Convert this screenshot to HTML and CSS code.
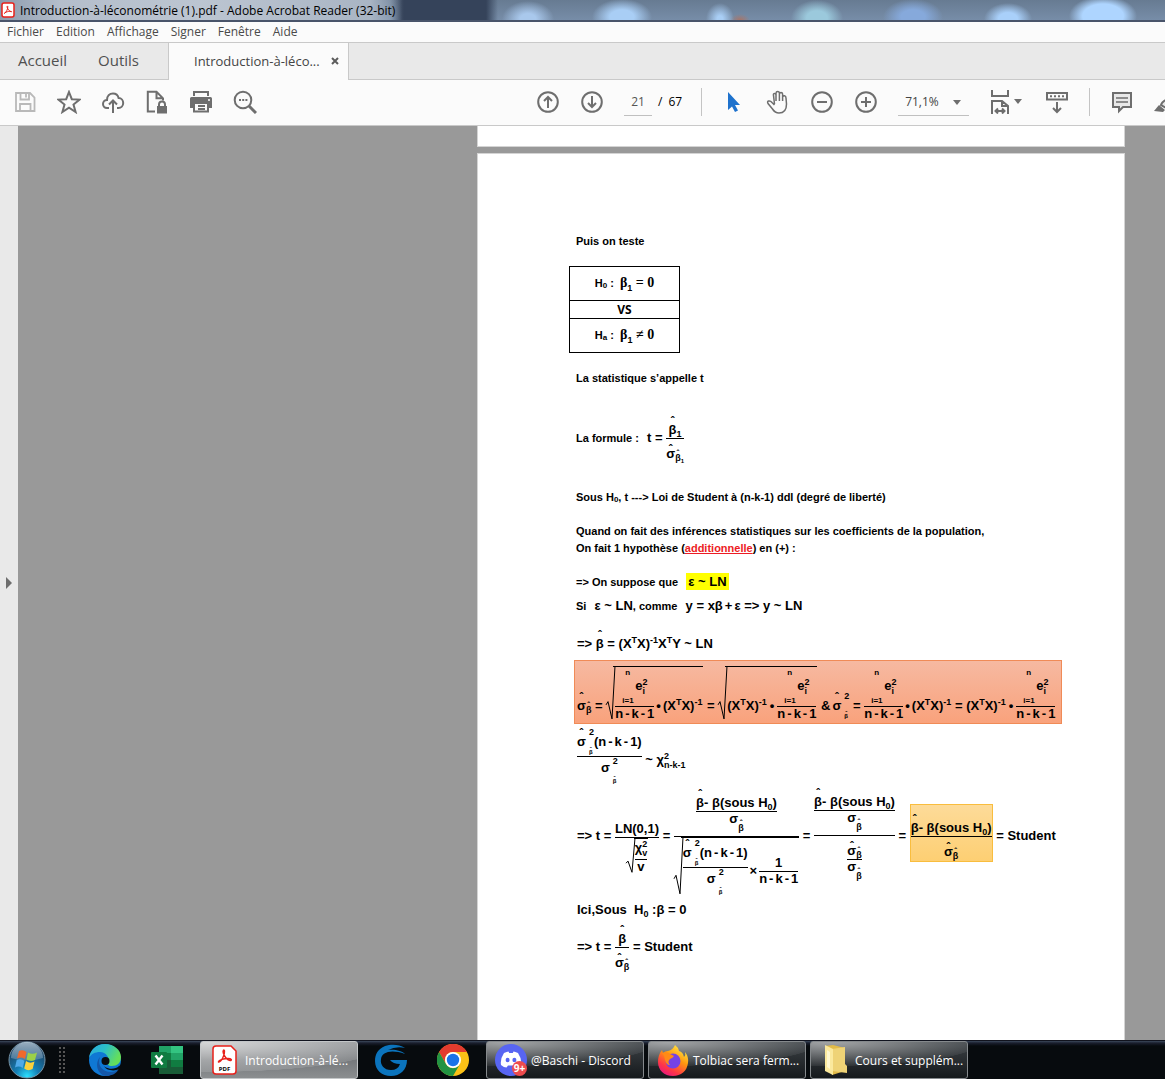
FILE: index.html
```html
<!DOCTYPE html>
<html lang="fr">
<head>
<meta charset="utf-8">
<title>Introduction-à-léconométrie (1).pdf - Adobe Acrobat Reader (32-bit)</title>
<link rel="stylesheet" href="styles.css">
</head>
<body>
<header class="titlebar">
  <svg class="app-icon" width="14" height="16" viewBox="0 0 14 16"><rect x="1" y="1" width="12" height="14" rx="2" fill="#fff" stroke="#e8201a" stroke-width="1.5"/><path d="M3.5 11.5C5 10.500 7 7 6.800 4.500C6.700 3.600 5.800 4 6.200 5.400C6.800 7.500 8.600 9.800 10.600 9.800C11.200 9.400 8 8.600 3.600 10.800Z" fill="none" stroke="#e8201a" stroke-width="1"/></svg>
  <span class="app-title">Introduction-à-léconométrie (1).pdf - Adobe Acrobat Reader (32-bit)</span>
</header>
<nav class="menubar">
  <button>Fichier</button><button>Edition</button><button>Affichage</button><button>Signer</button><button>Fenêtre</button><button>Aide</button>
</nav>
<div class="tabs">
  <button class="tab">Accueil</button><button class="tab">Outils</button>
  <div class="doc-tab"><button class="doc-name">Introduction-à-léco...</button><button class="close" aria-label="Fermer"><svg width="8" height="8" viewBox="0 0 8 8"><path d="M1 1L7 7M7 1L1 7" stroke="#5c5c5c" stroke-width="2"/></svg></button></div>
</div>
<div class="toolbar">
  <div class="tools files">
    <button aria-label="Enregistrer"><svg viewBox="0 0 24 24"><g fill="none" stroke="#b9b9b9" stroke-width="1.800"><path d="M3 3H17L21.500 7.500V21H3Z"/><path d="M7.500 3V9.500H16V3M7 21V14H17.500V21"/><path d="M13 4V7.500"/></g></svg></button>
    <button aria-label="Favori"><svg viewBox="0 0 24 24"><path d="M12 2L14.800 9.200L22.600 9.600L16.500 14.500L18.600 22L12 17.700L5.400 22L7.500 14.500L1.400 9.600L9.200 9.200Z"/></svg></button>
    <button aria-label="Envoyer"><svg viewBox="0 0 24 24"><path d="M8 18H6C3.500 18 2 16 2 14C2 11.500 4 10 6 10C6 6 8.500 3.500 12 3.500C15 3.500 17 5.500 17.600 8C20.500 8 22.200 10.500 22.200 13C22.200 16 20 18 17.500 18H16M12 23V11M8 14.500L12 10.500L16 14.500"/></svg></button>
    <button aria-label="Protéger"><svg viewBox="0 0 24 24"><path d="M10 21.500H2.800V1.800H11.500L18 8.300V10.500M11.500 2V8.300H18"/><rect x="12" y="16" width="10" height="7.500" fill="#6e6e6e" stroke="none"/><path d="M14 16V14.500A3 3 0 0 1 20 14.500V16"/></svg></button>
    <button aria-label="Imprimer"><svg viewBox="0 0 24 24"><path d="M1 8.500Q1 7 2.500 7H21.500Q23 7 23 8.500V18H19V14H5V18H1Z" fill="#6e6e6e" stroke="none"/><path d="M5 6V2H19V6M5 14V21.500H19V14M9 16H16M9 19H16"/><circle cx="20" cy="10" r="1" fill="#fff" stroke="none"/></svg></button>
    <button aria-label="Rechercher"><svg viewBox="0 0 24 24"><circle cx="10" cy="10" r="8.300"/><path d="M16 16L23 23" stroke-width="3"/><path d="M6 10H8M9.200 10H11.200M12.400 10H14.400" stroke-width="2.200"/></svg></button>
  </div>
  <div class="tools paging">
    <button aria-label="Page précédente"><svg viewBox="0 0 24 24"><circle cx="12" cy="12" r="9.800"/><path d="M12 18V7M8 11L12 7L16 11"/></svg></button>
    <button aria-label="Page suivante"><svg viewBox="0 0 24 24"><circle cx="12" cy="12" r="9.800"/><path d="M12 6V17M8 13L12 17L16 13"/></svg></button>
  </div>
  <label class="page-no"><input value="21" aria-label="Page"><span>/</span><span>67</span></label>
  <i class="rule"></i>
  <div class="tools pointer">
    <button aria-label="Sélection"><svg viewBox="0 0 24 24"><path d="M6 2V20L10 16.500L13 22L16 20.500L13 15H18Z" fill="#1e72cd" stroke="none"/></svg></button>
    <button aria-label="Main"><svg viewBox="0 0 24 24" class="thin"><path d="M8.500 14L7.500 5.500Q7 3.500 8.600 3.400Q10 3.400 10 5V11M10 6V3Q10.200 1.500 11.700 1.500Q13.300 1.500 13.400 3V11M13.400 4Q13.600 2.500 15 2.500Q16.500 2.600 16.600 4V11M16.600 7Q17 5.500 18.500 5.700Q20 6 20 8L20.500 14Q20.500 23 13 23Q9 23 6.500 19L2 13.500Q1 11.500 2.500 11Q4.500 10.500 6 12.500L8.500 15"/></svg></button>
    <button aria-label="Zoom arrière"><svg viewBox="0 0 24 24"><circle cx="12" cy="12" r="9.800"/><path d="M7 12H17"/></svg></button>
    <button aria-label="Zoom avant"><svg viewBox="0 0 24 24"><circle cx="12" cy="12" r="9.800"/><path d="M7 12H17M12 7V17"/></svg></button>
  </div>
  <div class="zoom"><select aria-label="Zoom"><option>71,1%</option></select><svg width="8" height="5" viewBox="0 0 8 5"><path d="M0 0H8L4 5Z" fill="#6e6e6e"/></svg></div>
  <button class="fit" aria-label="Affichage de page"><svg viewBox="0 0 24 24"><path d="M4 0V6H20V0M4 24V11H14L20 16V24M14 11V16H20M8 21H16M10 18.500L7.500 21L10 23.500M14 18.500L16.500 21L14 23.500"/></svg><svg class="caret" viewBox="0 0 8 5"><path d="M0 0H8L4 5Z"/></svg></button>
  <button class="keys" aria-label="Barre d'outils"><svg viewBox="0 0 24 24"><path d="M2 3H22V9.500H2Z"/><path d="M5 6.200H19" stroke-dasharray="2 2"/><path d="M12 12V22M8 18L12 22L16 18"/></svg></button>
  <i class="rule"></i>
  <div class="tools marks">
    <button aria-label="Commentaire"><svg viewBox="0 0 24 24"><path d="M3 3H21V17H13L9 21V17H3Z" fill="#e8e8e8"/><path d="M6 8H18M6 12H18" stroke-width="1.500"/></svg></button>
    <button aria-label="Surligner"><svg viewBox="0 0 24 24"><path d="M7 15Q8 11 14 9L21 3L24 7L17 15Q16 19 12 18Z" fill="#e8e8e8"/><path d="M0 21L5 15L11 20L9 22Z" fill="#6e6e6e" stroke="none"/></svg></button>
  </div>
</div>
<main class="viewer">
  <aside class="rail"><svg width="6" height="12" viewBox="0 0 6 12"><path d="M0 0L6 6L0 12Z" fill="#6e6e6e"/></svg></aside>
  <div class="canvas">
    <div class="page previous"></div>
    <article class="page">
      <p>Puis on teste</p>
      <table class="hypo">
        <tr class="tall"><td>H<sub>0</sub> : &nbsp;<span class="serif">β<sub>1</sub> = 0</span></td></tr>
        <tr><td class="vs">VS</td></tr>
        <tr class="tall"><td>H<sub>a</sub> : &nbsp;<span class="serif">β<sub>1</sub> ≠ 0</span></td></tr>
      </table>
      <p>La statistique s’appelle t</p>
      <p class="formule">La formule : &nbsp;<span class="m">t = <span class="frac low"><span class="num"><span class="hat">β</span><sub>1</sub></span><span class="den"><span class="hat near">σ</span><sub><span class="hat small">β</span><sub>1</sub></sub></span></span></span></p>
      <p class="after-formule">Sous H<sub>0</sub>, t ---&gt; Loi de Student à (n-k-1) ddl (degré de liberté)</p>
      <p class="para">Quand on fait des inférences statistiques sur les coefficients de la population,<br>On fait 1 hypothèse (<u>additionnelle</u>) en (+) :</p>
      <p class="para">=&gt; On suppose que &nbsp;<mark class="m">ε ~ LN</mark></p>
      <p class="si">Si &nbsp;<span class="m">ε ~ LN</span>, comme &nbsp;<span class="m">y = xβ<span class="o">+</span>ε =&gt; y ~ LN</span></p>
      <div class="m line beta">=&gt; <span class="hat">β</span> = (X<sup>T</sup>X)<sup>-1</sup>X<sup>T</sup>Y ~ LN</div>
      <div class="m box salmon"><span class="hat">σ</span><sub><span class="hat small">β</span></sub> = <span class="root"><svg viewBox="0 0 9 50" preserveAspectRatio="none"><path d="M0 36L2 33L6 49L9 0"/></svg><span class="frac"><span class="num sum"><small>n</small><span class="term">e<span class="ss"><i>2</i><i>i</i></span></span><small>i=1</small></span><span class="den">n<span class="o">-</span>k<span class="o">-</span>1</span></span><span class="o">•</span>(X<sup>T</sup>X)<sup>-1</sup></span> = <span class="root"><svg viewBox="0 0 9 50" preserveAspectRatio="none"><path d="M0 36L2 33L6 49L9 0"/></svg>(X<sup>T</sup>X)<sup>-1</sup><span class="o wider">•</span><span class="frac"><span class="num sum"><small>n</small><span class="term">e<span class="ss"><i>2</i><i>i</i></span></span><small>i=1</small></span><span class="den">n<span class="o">-</span>k<span class="o">-</span>1</span></span></span> &amp;<span class="hat gap">σ</span><span class="ss wide"><i>2</i><i><span class="hat tiny">β</span></i></span> = <span class="frac"><span class="num sum"><small>n</small><span class="term">e<span class="ss"><i>2</i><i>i</i></span></span><small>i=1</small></span><span class="den">n<span class="o">-</span>k<span class="o">-</span>1</span></span><span class="o">•</span>(X<sup>T</sup>X)<sup>-1</sup> = (X<sup>T</sup>X)<sup>-1</sup><span class="o wider">•</span><span class="frac"><span class="num sum"><small>n</small><span class="term">e<span class="ss"><i>2</i><i>i</i></span></span><small>i=1</small></span><span class="den">n<span class="o">-</span>k<span class="o">-</span>1</span></span></div>
      <div class="m line chi"><span class="frac"><span class="num"><span class="hat">σ</span><span class="ss wide"><i>2</i><i><span class="hat tiny">β</span></i></span>(n<span class="o">-</span>k<span class="o">-</span>1)</span><span class="den">σ<span class="ss under"><i>2</i><i><span class="hat tiny">β</span></i></span></span></span> ~ χ<span class="ss"><i>2</i><i>n-k-1</i></span></div>
      <div class="m line big">=&gt; t = <span class="frac mid"><span class="num">LN(0,1)</span><span class="den"><span class="root"><svg viewBox="0 0 9 50" preserveAspectRatio="none"><path d="M0 36L2 33L6 49L9 0"/></svg><span class="frac"><span class="num">χ<span class="ss"><i>2</i><i>v</i></span></span><span class="den">v</span></span></span></span></span> = <span class="frac deep"><span class="num"><span class="frac"><span class="num"><span class="hat">β</span>- β(sous H<sub>0</sub>)</span><span class="den hang">σ<sub class="drop"><span class="hat small">β</span></sub></span></span></span><span class="den"><span class="root"><svg viewBox="0 0 9 50" preserveAspectRatio="none"><path d="M0 36L2 33L6 49L9 0"/></svg><span class="frac"><span class="num"><span class="hat">σ</span><span class="ss wide"><i>2</i><i><span class="hat tiny">β</span></i></span>(n<span class="o">-</span>k<span class="o">-</span>1)</span><span class="den">σ<span class="ss under"><i>2</i><i><span class="hat tiny">β</span></i></span></span></span><span class="o">×</span><span class="frac"><span class="num">1</span><span class="den">n<span class="o">-</span>k<span class="o">-</span>1</span></span></span></span></span> = <span class="frac mid"><span class="num"><span class="frac"><span class="num"><span class="hat">β</span>- β(sous H<sub>0</sub>)</span><span class="den hang">σ<sub class="drop"><span class="hat small">β</span></sub></span></span></span><span class="den clear"><span class="frac"><span class="num"><span class="hat near">σ</span><sub><span class="hat small">β</span></sub></span><span class="den">σ<sub class="drop"><span class="hat small">β</span></sub></span></span></span></span> = <span class="box amber"><span class="frac low"><span class="num"><span class="hat">β</span>- β(sous H<sub>0</sub>)</span><span class="den"><span class="hat near">σ</span><sub><span class="hat small">β</span></sub></span></span></span> = Student</div>
      <div class="m line ici">Ici,Sous &nbsp;H<sub>0</sub> :β = 0</div>
      <div class="m line last">=&gt; t = <span class="frac low"><span class="num"><span class="hat">β</span></span><span class="den"><span class="hat near">σ</span><sub><span class="hat small">β</span></sub></span></span> = Student</div>
    </article>
  </div>
</main>
<footer class="taskbar">
  <button class="start" aria-label="Démarrer"><svg width="38" height="38" viewBox="0 0 38 38"><defs><radialGradient id="orb" cx=".5" cy=".95" r=".8"><stop offset="0" stop-color="#2be0ff"/><stop offset=".4" stop-color="#157fb5"/><stop offset="1" stop-color="#1d4263"/></radialGradient><linearGradient id="shine" x2="0" y2="1"><stop offset="0" stop-color="#dce9f2"/><stop offset="1" stop-color="#5d86a6"/></linearGradient></defs><circle cx="19" cy="19" r="18" fill="url(#orb)" stroke="#7795a8" stroke-width="1"/><path d="M3 17A16 16 0 0 1 35 17Q19 22 3 17Z" fill="url(#shine)" opacity=".65"/><path d="M11 10Q15 8 18.500 11L17 18Q13 15.500 9 17.500Z" fill="#f0682c"/><path d="M20 11.500Q24 14 29 11.500L27 19Q22.500 21 18.500 18.500Z" fill="#9bd048"/><path d="M8.700 19Q12.500 17 16.500 19.700L14.700 27Q11 24.500 7 26.500Z" fill="#4fa9e8"/><path d="M18 20Q22 23 26.500 20.500L24.600 28Q20 30.500 16.200 27.500Z" fill="#fbd13c"/></svg></button>
  <i class="grip"></i>
  <button class="pin" aria-label="Edge"><svg width="32" height="32" viewBox="0 0 32 32"><defs><linearGradient id="eg" x2="1" y2=".4"><stop offset="0" stop-color="#2aa8e0"/><stop offset=".5" stop-color="#2bbfc9"/><stop offset="1" stop-color="#65df59"/></linearGradient></defs><circle cx="16" cy="16" r="16" fill="#0f78d4"/><path d="M0 14C1 6 7 0 16 0C25 0 32 6 32 13C32 19 28 22 23 22C19 22 18 20 19 18C21 14 17 8 11 8C6 8 2 10 0 14Z" fill="url(#eg)"/><path d="M11 13C8 21 13 28 22 28C26 28 28 27 30 25C27 30 22 32 17 32C9 31 5 20 11 13Z" fill="#1457a8"/><path d="M18 13C14 14 12 20 16 23C21 26 27 25 30 22L32 21L31 24C29 26 25 27 21 26C15 25 12 19 15 14Z" fill="#080d10"/><circle cx="16.500" cy="17" r="4" fill="#080d10"/></svg></button>
  <button class="pin" aria-label="Excel"><svg width="32" height="30" viewBox="0 0 32 30"><path fill="#21a366" d="M8 1H20V8H8Z"/><path fill="#33c481" d="M20 1H32V8H20Z"/><path fill="#107c41" d="M8 8H32V15H8Z"/><path fill="#21a366" d="M20 8H32V15H20Z"/><path fill="#107c41" d="M20 15H32V22H20Z"/><path fill="#185c37" d="M8 15H20V22H32V29H8Z"/><rect y="7" width="16" height="16" rx="1" fill="#107c41"/><path d="M4.500 10.500L11.500 19.500M11.500 10.500L4.500 19.500" stroke="#fff" stroke-width="2.400"/></svg></button>
  <button class="task active"><svg width="32" height="30" viewBox="0 0 32 30"><path d="M7 1H22L27 6V26Q27 29 24 29H7Q4 29 4 26V4Q4 1 7 1Z" fill="#fff" stroke="#e8201a" stroke-width="1.500"/><path d="M10 17C12 17 16 10 15.500 6C15 4 13.500 5 14.300 8C15.500 12 18.500 15.500 21 15.500C23.500 15.500 22.500 13.500 19 13.500C15 13.500 10 15 9.500 16.500C9.300 17 9.500 17.300 10 17Z" fill="none" stroke="#e8201a" stroke-width="1.400"/><text x="15.500" y="26" text-anchor="middle" font-size="6" font-weight="bold" font-family="Open Sans, sans-serif">PDF</text></svg><span>Introduction-à-lé...</span></button>
  <button class="pin" aria-label="G"><svg width="34" height="32" viewBox="0 0 34 32"><path d="M31 4C25 0 17 0 11 2C4 5 1 10 1 17C1 26 8 32 17 32C26 32 33 26 33 16H16Q19 20 26 20Q24 26 17 26C10 26 6 21 7 15C8 8 17 5 31 10C28 7 21 5 14 6Q22 2 31 4Z" fill="#0b74bd"/></svg></button>
  <button class="pin" aria-label="Chrome"><svg width="32" height="32" viewBox="0 0 32 32"><circle cx="16" cy="16" r="16" fill="#fbc116"/><path d="M2.100 8A16 16 0 0 1 29.900 8H16A8 8 0 0 0 9 20Z" fill="#e33b2e"/><path d="M2.100 8A16 16 0 0 0 16 32L23 20A8 8 0 0 1 9 20Z" fill="#229342"/><circle cx="16" cy="16" r="8" fill="#fff"/><circle cx="16" cy="16" r="6.200" fill="#1a73e8"/></svg></button>
  <button class="task"><svg width="32" height="32" viewBox="0 0 32 32"><circle cx="16" cy="16" r="16" fill="#5865f2"/><path d="M9 9Q12 7.500 13.500 7.500L14.200 9H17.800L18.500 7.500Q20 7.500 23 9Q27 15 26 21Q23 23.500 20.500 23.500L19 21.500H13L11.500 23.500Q9 23.500 6 21Q5 15 9 9Z" fill="#fff"/><ellipse cx="12.600" cy="16" rx="2" ry="2.300" fill="#5865f2"/><ellipse cx="19.400" cy="16" rx="2" ry="2.300" fill="#5865f2"/><circle cx="24.500" cy="24.500" r="7.500" fill="#ed4b4e"/><text x="24.500" y="28" text-anchor="middle" font-size="10" font-weight="bold" fill="#fff" font-family="Open Sans, sans-serif">9+</text></svg><span>@Baschi - Discord</span></button>
  <button class="task"><svg width="32" height="32" viewBox="0 0 32 32"><defs><linearGradient id="ff" x1=".8" y1="0" x2=".2" y2="1"><stop offset="0" stop-color="#fff44f"/><stop offset=".4" stop-color="#ff980e"/><stop offset=".75" stop-color="#ff3647"/><stop offset="1" stop-color="#e31587"/></linearGradient></defs><path d="M18 1Q21 3 22 7Q26 8 27 13Q29 11 28 8Q32 13 31 19C30 27 24 32 16 32C7 32 1 26 1 18Q1 11 5 6L6 9Q8 7 11 7Q16 6 18 1Z" fill="url(#ff)"/><circle cx="16" cy="17" r="7.500" fill="#7542e5"/><path d="M5 9Q10 7 13 10L17 12Q16 14 13 15Q10 18 13 21Q9 21 8 16Q8 12 5 9Z" fill="#ff8a16"/></svg><span>Tolbiac sera ferm...</span></button>
  <button class="task"><svg width="32" height="32" viewBox="0 0 32 32"><path d="M6 2L14 1L26 4V27L13 31Z" fill="#e2bb48"/><path d="M13 5L26 3V20L28 22V29L13 27Z" fill="#efd376"/><path d="M6 1L14 5V31L6 27Z" fill="#fbe99d"/><path d="M8 6L11 8V25L8 23Z" fill="#fff7cf"/></svg><span>Cours et supplém...</span></button>
</footer>
</body>
</html>
```
FILE: styles.css
```css
* { box-sizing: border-box; }
body { margin: 0; height: 100vh; display: flex; flex-direction: column; overflow: hidden; font-family: "Open Sans", "Noto Sans", sans-serif; font-size: 12px; color: #333; background: #fbfbfb; }
button { border: 0; padding: 0; background: none; font: inherit; color: inherit; }
p { margin: 0; }

/* window title */
.titlebar { display: flex; align-items: center; flex: none; height: 22px; padding-left: 1px; gap: 5px; overflow: hidden; border-bottom: 2px solid #49546a; color: #000;
  background:
    linear-gradient(90deg, #8d9bad 0, #b4becb 60px, #bcc5d1 200px, #a9b5c4 370px, #a9b5c400 404px),
    linear-gradient(90deg, transparent 390px, #35435a 402px, #35435a 486px, transparent 498px),
    radial-gradient(ellipse 26px 18px at 528px 19px, #a9c8ec 30%, #a9c8ec00 100%),
    radial-gradient(ellipse 30px 18px at 622px 17px, #a9cef5 40%, #a9cef500 100%),
    radial-gradient(ellipse 14px 16px at 720px 19px, #a9cef5 20%, #a9cef500 100%),
    radial-gradient(ellipse 10px 6px at 740px 20px, #a2776f 10%, #a2776f00 100%),
    radial-gradient(ellipse 26px 18px at 817px 18px, #9bc9dc 40%, #9bc9dc00 100%),
    radial-gradient(ellipse 30px 18px at 913px 17px, #86a9db 40%, #86a9db00 100%),
    radial-gradient(ellipse 24px 16px at 1008px 19px, #a9d0fa 40%, #a9d0fa00 100%),
    radial-gradient(ellipse 34px 20px at 1103px 16px, #aed5ff 60%, #aed5ff00 100%),
    linear-gradient(#677b92, #778da8); }
.app-icon { flex: none; }
.app-title { white-space: nowrap; }

.menubar { display: flex; flex: none; height: 20px; padding: 0 0 2px 7px; gap: 12px; color: #4a4a4a; }
.tabs { display: flex; flex: none; height: 38px; background: #e9e9e9; border: solid #c9c9c9; border-width: 1px 0; color: #505050; font-size: 15px; }
.tab { padding: 0 0 2px 18px; margin-right: 13px; }
.doc-tab { display: flex; align-items: center; margin: 0 0 -1px 16px; width: 181px; padding: 0 0 2px 25px; gap: 11px; background: #fbfbfb; border: solid #c9c9c9; border-width: 0 1px; font-size: 13px; color: #444; }
.close { display: flex; }

/* tools */
.toolbar { display: flex; align-items: center; flex: none; height: 46px; padding: 0 0 2px 13px; overflow: hidden; border-bottom: 1px solid #c9c9c9; }
.toolbar > * { flex: none; }
.toolbar svg { display: block; width: 24px; height: 24px; fill: none; stroke: #6e6e6e; stroke-width: 2; }
.toolbar svg.thin { stroke-width: 1.5; }
.tools { display: flex; gap: 20px; }
.paging { margin-left: 279px; }
.page-no { display: flex; align-items: center; gap: 6px; margin: 0 19px 0 20px; color: #000; }
.page-no input { width: 28px; height: 28px; padding: 0; border: 0; border-bottom: 1px solid #c0c0c0; background: none; text-align: center; font: inherit; color: #555; }
.rule { width: 1px; height: 28px; background: #c4c4c4; }
.pointer { margin-left: 20px; }
.zoom { position: relative; margin-left: 20px; width: 71px; }
.zoom select { appearance: none; width: 100%; height: 28px; padding: 0 0 0 7px; border: 0; border-bottom: 1px solid #c0c0c0; border-radius: 0; background: none; font: inherit; color: #444; }
.toolbar .zoom svg { position: absolute; right: 8px; top: 12px; width: 8px; height: 5px; stroke: none; }
.fit { display: flex; align-items: center; margin-left: 19px; gap: 2px; }
.toolbar .fit .caret { width: 8px; height: 5px; fill: #6e6e6e; stroke: none; }
.keys { margin: 0 20px 0 23px; }
.marks { margin-left: 20px; }

/* document */
.viewer { display: flex; flex: 1; min-height: 0; overflow: hidden; }
.rail { display: flex; align-items: center; justify-content: center; width: 18px; background: #e9e9e9; }
.canvas { flex: 1; display: flex; flex-direction: column; align-items: flex-end; gap: 6px; padding-right: 40px; overflow: hidden; background: #999; }
.page { flex: none; width: 648px; min-height: 916px; padding: 79px 63px 0 98px; background: #fff; border: 1px solid #d4d4d4; font: bold 11px/17px "Liberation Sans", Arial, sans-serif; color: #000; white-space: nowrap; }
.previous { min-height: 0; height: 21px; padding: 0; border-top: 0; }
.hypo { margin: 16px 0 17px -7px; width: 111px; border-collapse: collapse; text-align: center; font: inherit; }
.hypo td { padding: 0; border: 1px solid #000; }
.hypo .tall td { height: 34px; padding-bottom: 2px; }
.hypo .vs { font: bold 12px/17px "Open Sans", sans-serif; }
.serif { font-family: "Liberation Serif", "Times New Roman", serif; font-size: 14px; }
sub, sup { font-size: 8px; line-height: 0; }
sub { vertical-align: -1px; }
sup { vertical-align: 5px; font-size: 9px; }
.m sub { vertical-align: -3px; font-size: 9px; }
.m sub sub { font-size: 6px; vertical-align: -2px; }
.serif sub { vertical-align: -4px; font-family: "Liberation Sans", Arial, sans-serif; font-size: 9px; }
u { color: #ed1c24; }
.para { margin-top: 17px; }
.formule { margin-top: 36px; }
.after-formule { margin-top: 28px; }
.si { margin-top: 7px; }
p .m { margin-left: 2px; }
mark { padding: 1px 2px; background: #ff0; color: #000; }

/* formulas: a fraction sits on the baseline of its denominator */
.m { font-size: 13px; line-height: 14px; }
.o { margin: 0 2px; }
.o.wider { margin: 0 3px; }
.frac { display: inline-block; vertical-align: -8px; text-align: center; line-height: 14px; }
.frac.low { vertical-align: -16px; }
.frac.low > .den, .den.clear { padding-top: 8px; }
.frac.mid { vertical-align: -23px; }
.frac.deep { vertical-align: -35px; }
.num, .den { display: block; }
.num { padding-bottom: 1px; border-bottom: 1px solid #000; }
.den.hang { padding-bottom: 7px; }
.sum { display: flex; flex-direction: column; align-items: flex-start; padding-bottom: 0; }
.sum small { font-size: 8px; line-height: 10px; padding-left: 7px; }
.sum small:first-child { padding-left: 10px; }
.term { padding-left: 20px; }
.ss { display: inline-block; vertical-align: -4px; text-align: left; font-size: 9px; line-height: 9px; }
.ss i { display: block; font-style: normal; }
.ss.wide, .ss.under { padding-left: 3px; line-height: 8px; }
.ss.wide { vertical-align: -8px; margin-bottom: -1px; }
.ss.under { vertical-align: -11px; }
.ss.wide i + i, .ss.under i + i { margin-top: 11px; }
.root { display: inline-block; position: relative; padding: 1px 1px 0 9px; border-top: 1px solid #000; border-image: linear-gradient(90deg, transparent 8px, #000 8px) 1; }
.root svg { position: absolute; left: 0; top: -1px; width: 9px; height: 100%; overflow: visible; }
.root path { fill: none; stroke: #000; stroke-width: 1; vector-effect: non-scaling-stroke; }
.hat { position: relative; }
.hat.gap { margin-left: 2px; }
.hat::before { content: "ˆ"; position: absolute; left: 0; right: 0; top: -9px; text-align: center; font-size: 11px; line-height: 14px; }
.hat.near::before { top: -5px; }
.hat.small::before { top: -5px; font-size: 8px; line-height: 10px; }
.hat.tiny { font-size: 6px; }
.hat.tiny::before { top: -4px; font-size: 6px; line-height: 8px; }
.m sub.drop { vertical-align: -8px; }
.line { margin-left: 1px; }
.beta { margin-top: 22px; }
.box { border: 1px solid #f08b57; }
.salmon { margin: 9px -1px 0 -2px; padding: 5px 0 2px 2px; background: linear-gradient(#f6b9a1, #f9a27c); }
.amber { display: inline-block; padding: 16px 0 2px; background: linear-gradient(#fddb99, #fdcf73); border-color: #f9bd3e; }
.chi { margin-top: 4px; }
.big { margin-top: 10px; }
.ici { margin-top: 7px; }
.last { margin-top: 15px; }

/* taskbar */
.taskbar { display: flex; flex: none; height: 39px; padding-left: 8px; background: linear-gradient(#3c4a5c 0, #1a1f2e 2px, #070b0e 5px); border-top: 1px solid #11141f; color: #fff; }
.taskbar > * { flex: none; }
.taskbar svg { display: block; flex: none; }
.start { width: 38px; }
.grip { width: 8px; margin: 5px 8px 4px 12px; background: radial-gradient(circle, #555 1px, transparent 1px) 0 0 / 4px 4px; }
.pin { display: flex; align-items: center; justify-content: center; width: 60px; margin: 0 1px; }
.task { display: flex; align-items: center; gap: 4px; width: 158px; margin: 0 2px; padding: 0 8px; border: 1px solid #85898c; border-radius: 3px; text-align: left; font-size: 12px; background: radial-gradient(ellipse 150px 24px at 20px 0, #ffffff88 0, #ffffff11 99%, transparent 100%), linear-gradient(#3c4145, #15191c); }
.task span { white-space: nowrap; }
.task.active { border-color: #c3c6c8; background: radial-gradient(ellipse 180px 30px at 10px 0, #ffffffaa 0, #ffffff22 99%, transparent 100%), linear-gradient(#85888b, #75787b 50%, #8b8e90); }
```
